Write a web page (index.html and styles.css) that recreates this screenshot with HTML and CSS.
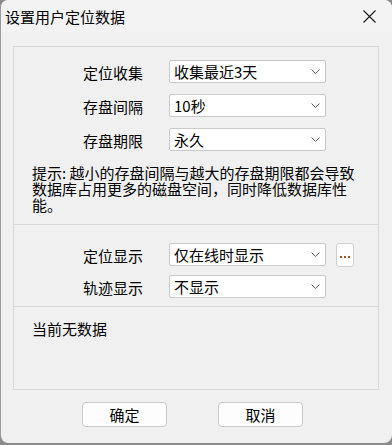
FILE: index.html
```html
<!DOCTYPE html>
<html lang="zh-CN">
<head>
<meta charset="utf-8">
<link rel="stylesheet" href="styles.css">
</head>
<body>
<div class="window">
  <div class="titlebar">
    <span class="title">设置用户定位数据</span>
    <svg class="close" width="13" height="13" viewBox="0 0 13 13"><path d="M0.5 0.5 L12.5 12.5 M12.5 0.5 L0.5 12.5" stroke="#1a1a1a" stroke-width="1.1" fill="none"/></svg>
  </div>
  <div class="content">
    <div class="group">
      <div class="section s1">
        <div class="rows r1">
          <span class="label">定位收集</span>
          <div class="combo"><span>收集最近3天</span><svg class="chev" width="9" height="5" viewBox="0 0 9 5"><path d="M0.5 0.5 L4.5 4.5 L8.5 0.5" stroke="#606060" fill="none"/></svg></div>
          <span class="label">存盘间隔</span>
          <div class="combo"><span>10秒</span><svg class="chev" width="9" height="5" viewBox="0 0 9 5"><path d="M0.5 0.5 L4.5 4.5 L8.5 0.5" stroke="#606060" fill="none"/></svg></div>
          <span class="label">存盘期限</span>
          <div class="combo"><span>永久</span><svg class="chev" width="9" height="5" viewBox="0 0 9 5"><path d="M0.5 0.5 L4.5 4.5 L8.5 0.5" stroke="#606060" fill="none"/></svg></div>
        </div>
        <p class="hint">提示: 越小的存盘间隔与越大的存盘期限都会导致数据库占用更多的磁盘空间，同时降低数据库性能。</p>
      </div>
      <div class="section s2">
        <div class="rows r2">
          <span class="label">定位显示</span>
          <div class="combo"><span>仅在线时显示</span><svg class="chev" width="9" height="5" viewBox="0 0 9 5"><path d="M0.5 0.5 L4.5 4.5 L8.5 0.5" stroke="#606060" fill="none"/></svg></div>
          <button class="more"><svg width="10" height="3" viewBox="0 0 10 3"><rect x="0" y="0" width="2" height="2" fill="#a0521e"/><rect x="4" y="0" width="2" height="2" fill="#a0521e"/><rect x="8" y="0" width="2" height="2" fill="#a0521e"/></svg></button>
          <span class="label">轨迹显示</span>
          <div class="combo"><span>不显示</span><svg class="chev" width="9" height="5" viewBox="0 0 9 5"><path d="M0.5 0.5 L4.5 4.5 L8.5 0.5" stroke="#606060" fill="none"/></svg></div>
        </div>
      </div>
      <div class="section s3">
        <p class="status">当前无数据</p>
      </div>
    </div>
    <div class="buttons">
      <button class="btn">确定</button>
      <button class="btn">取消</button>
    </div>
  </div>
</div>
</body>
</html>
```
FILE: styles.css
```css
* { box-sizing: border-box; }
html, body { margin: 0; padding: 0; }
body {
  background: #8a8a8a;
  width: 392px;
  height: 445px;
  overflow: hidden;
  font-family: "Noto Sans CJK SC", "Noto Sans", sans-serif;
  color: #000;
}
.window {
  width: 392px;
  height: 443px;
  background: #f0f0f0;
  border-radius: 8px;
  border-left: 1px solid #9a9a9a;
  overflow: hidden;
}
.titlebar {
  height: 32px;
  background: #f3f3f3;
  display: flex;
  align-items: center;
  justify-content: space-between;
  padding: 0 16px 0 4px;
}
.title {
  font-size: 15px;
  line-height: 16px;
  margin-top: 1px;
}
.close { display: block; margin-top: 1px; }
.content {
  padding: 14px 0 0 12px;
}
.group {
  width: 366px;
  height: 344px;
  border: 1px solid #d9d9d9;
}
.section {
  border-bottom: 1px solid #d9d9d9;
}
.section.s3 { border-bottom: none; }
.s1 { height: 178px; padding-top: 13px; }
.s2 { height: 82px; padding-top: 16px; }
.rows {
  display: grid;
  grid-template-columns: 60px 157px 18px;
  column-gap: 26px;
  align-items: center;
  padding-left: 69px;
}
.r1 { row-gap: 11px; }
.r2 { row-gap: 8px; column-gap: 26px; }
.r2 .more { margin-left: -16px; }
.label {
  grid-column: 1;
  font-size: 15px;
  line-height: 16px;
  white-space: nowrap;
  margin-top: 3px;
}
.combo {
  grid-column: 2;
  height: 23px;
  background: #fff;
  border: 1px solid #cacaca;
  border-radius: 2px;
  display: flex;
  align-items: center;
  justify-content: space-between;
  padding: 0 5px 0 4px;
  font-size: 15px;
  line-height: 16px;
}
.combo span { margin-top: 1px; }
.chev { display: block; }
.more {
  grid-column: 3;
  width: 18px;
  height: 24px;
  background: #fdfdfd;
  border: 1px solid #cfcfcf;
  border-radius: 3px;
  padding: 0;
  display: flex;
  align-items: flex-end;
  justify-content: center;
  padding-bottom: 7px;
  margin-top: 2px;
}
.more svg { display: block; }
.hint {
  margin: 14px 0 0 18px;
  width: 327px;
  font-size: 15px;
  line-height: 16px;
}
.status {
  margin: 14px 0 0 18px;
  font-size: 15px;
  line-height: 16px;
}
.buttons {
  display: flex;
  gap: 51px;
  padding-left: 69px;
  margin-top: 12px;
}
.btn {
  width: 85px;
  height: 25px;
  background: #fdfdfd;
  border: 1px solid #cbcbcb;
  border-radius: 4px;
  font-family: "Noto Sans CJK SC", sans-serif;
  font-size: 15px;
  line-height: 16px;
  padding: 0;
  color: #000;
}
```
